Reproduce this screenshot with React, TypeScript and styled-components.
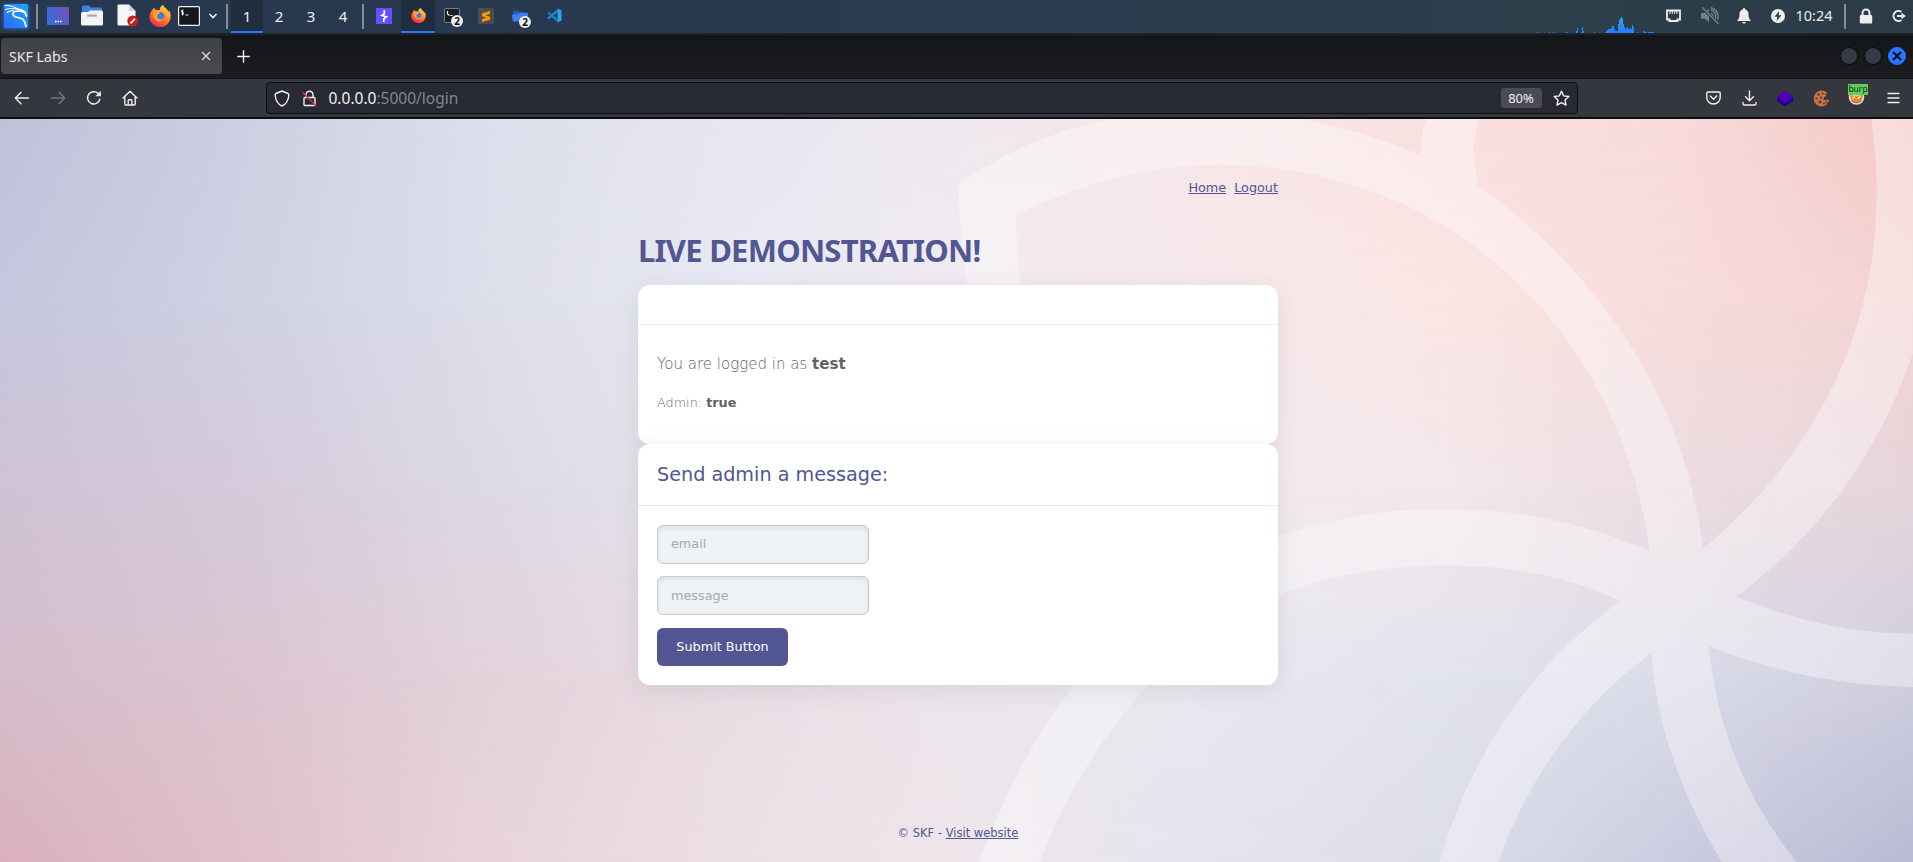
import React from "react";
import styled, { createGlobalStyle } from "styled-components";

const GlobalStyle = createGlobalStyle`
  * { box-sizing: border-box; }
  html, body { margin: 0; padding: 0; overflow: hidden; }
  body { font-family: "DejaVu Sans", sans-serif; }
`;

const Screen = styled.div`
  width: 1913px;
  height: 862px;
  display: flex;
  flex-direction: column;
  overflow: hidden;
  background: #17181c;
`;

/* ---------- desktop panel ---------- */

const Panel = styled.div`
  height: 33px;
  flex: none;
  display: flex;
  align-items: center;
  justify-content: space-between;
  background: linear-gradient(90deg, #28394f 0%, #28394f 35%, #2c3f4b 80%, #2b3c47 100%);
  font-family: "Noto Sans", sans-serif;
  color: #eeeeec;
`;

const PanelGroup = styled.div`
  height: 33px;
  display: flex;
  align-items: center;
`;

const Slot = styled.div<{ $w: number; $active?: boolean }>`
  width: ${(p) => p.$w}px;
  height: 33px;
  flex: none;
  display: flex;
  align-items: center;
  justify-content: center;
  font-size: 15px;
  padding-bottom: ${(p) => (p.$active ? 0 : 2)}px;
  border-bottom: ${(p) => (p.$active ? "2px solid #2777ff" : "none")};
  background: ${(p) => (p.$active ? "#1f2d3e" : "transparent")};
  svg { display: block; }
`;

const Separator = styled.div<{ $before: number; $after: number }>`
  width: 2px;
  height: 25px;
  flex: none;
  margin: 0 ${(p) => p.$after}px 0 ${(p) => p.$before}px;
  background: #858d97;
`;

const Clock = styled.div`
  width: 38px;
  padding-bottom: 2px;
  text-align: center;
  font-size: 14.4px;
`;

/* ---------- browser chrome ---------- */

const TabBar = styled.div`
  height: 45px;
  flex: none;
  display: flex;
  align-items: center;
  justify-content: space-between;
  padding-left: 1px;
  border-top: 2px solid #202228;
  background: linear-gradient(#15161a, #1b1b20);
  font-family: "Noto Sans", sans-serif;
`;

const TabArea = styled.div`
  display: flex;
  align-items: center;
`;

const Tab = styled.div`
  width: 221px;
  height: 36px;
  margin-top: -1px;
  padding: 0 11px 0 8px;
  display: flex;
  align-items: center;
  justify-content: space-between;
  border-radius: 4px;
  background: linear-gradient(#404145, #494a50);
  color: #e6e6e2;
  font-size: 14.2px;
`;

const NewTab = styled.div`
  width: 43px;
  display: flex;
  justify-content: center;
`;

const WindowButtons = styled.div`
  display: flex;
  gap: 6px;
  padding: 0 7px 1px 0;
`;

const WindowButton = styled.div<{ $close?: boolean }>`
  width: 18px;
  height: 18px;
  display: flex;
  align-items: center;
  justify-content: center;
  border-radius: 50%;
  border: 1px solid ${(p) => (p.$close ? "#2777ff" : "#090a0d")};
  background: ${(p) => (p.$close ? "#2777ff" : "#363a47")};
`;

const Toolbar = styled.div`
  height: 41px;
  flex: none;
  display: flex;
  align-items: center;
  justify-content: space-between;
  padding: 0 2px 0 4px;
  border-top: 1px solid #101114;
  border-bottom: 2px solid #0d0e11;
  background: #35373e;
  font-family: "Noto Sans", sans-serif;
`;

const ToolGroup = styled.div`
  display: flex;
  align-items: center;
`;

const ToolButton = styled.div`
  width: 36px;
  height: 34px;
  display: flex;
  align-items: center;
  justify-content: center;
`;

const UrlBar = styled.div`
  width: 1312px;
  height: 32px;
  margin-left: 0;
  display: flex;
  align-items: center;
  padding: 0 7px 0 5px;
  border: 1px solid #0c0d12;
  border-radius: 4px;
  background: #272935;
`;

const UrlIcon = styled.div`
  width: 28px;
  padding-left: 2px;
  display: flex;
`;

const UrlText = styled.div`
  flex: 1;
  padding-left: 1px;
  font-size: 15.5px;
  color: #85868f;
`;

const Host = styled.span`
  color: #f2f2f0;
`;

const Zoom = styled.div`
  width: 41px;
  height: 20px;
  margin-right: 11px;
  border-radius: 3px;
  background: #4a4b55;
  color: #f0f0ee;
  font-size: 13px;
  line-height: 21px;
  text-align: center;
`;

/* ---------- page ---------- */

const Page = styled.main`
  position: relative;
  flex: 1;
  display: flex;
  flex-direction: column;
  align-items: center;
  padding-left: 3px;
  color: #525693;
`;

const Backdrop = styled.svg`
  position: absolute;
  inset: 0;
`;

const Column = styled.div`
  position: relative;
  width: 640px;
  height: 743px;
  display: flex;
  flex-direction: column;
`;

const Nav = styled.nav`
  height: 20px;
  margin-top: 59px;
  display: flex;
  justify-content: flex-end;
  gap: 8px;
  font-size: 12.8px;
  line-height: 20px;
`;

const Link = styled.a`
  color: #525693;
  text-decoration: underline;
`;

const Title = styled.h1`
  height: 50px;
  margin: 27px 0 10px;
  font-family: "Noto Sans", sans-serif;
  font-weight: 700;
  font-size: 31px;
  letter-spacing: -0.76px;
  line-height: 50px;
  white-space: nowrap;
`;

const Card = styled.section<{ $h: number }>`
  height: ${(p) => p.$h}px;
  flex: none;
  border-radius: 12px;
  background: #fff;
  box-shadow: 0 5px 25px rgba(60, 60, 60, 0.1);
`;

const CardHeader = styled.div<{ $h: number }>`
  height: ${(p) => p.$h}px;
  padding: 17px 19px 0;
  border-bottom: 1px solid #ebebeb;
  font-size: 19.2px;
  line-height: 28px;
`;

const CardBody = styled.div`
  padding: 19px;
`;

const Line = styled.p<{ $size: number; $top: number }>`
  margin: ${(p) => p.$top}px 0 0;
  font-size: ${(p) => p.$size}px;
  line-height: 20px;
  font-weight: 200;
  color: #626466;
  strong { font-weight: 700; color: #5f6365; }
`;

const Field = styled.input<{ $lift?: number }>`
  display: block;
  width: 212px;
  height: 39px;
  margin: 0 0 12px;
  padding: 0 13px ${(p) => p.$lift ?? 0}px;
  border: 1px solid #c8cacb;
  border-radius: 6px;
  background: #eff3f6;
  box-shadow: inset 0 2px 5px rgba(0, 0, 0, 0.09);
  font: 12.8px "DejaVu Sans", sans-serif;
  &::placeholder { color: #a5a8aa; opacity: 1; }
`;

const Submit = styled.button`
  display: block;
  width: 131px;
  height: 38px;
  margin-top: 13px;
  padding: 0 0 2px;
  border: 0;
  border-radius: 6px;
  background: #525693;
  color: #fff;
  font: 12.8px "DejaVu Sans", sans-serif;
`;

const Footer = styled.footer`
  margin-top: 138px;
  font-size: 11.5px;
  line-height: 20px;
  text-align: center;
`;

/* ---------- backdrop ---------- */

const meshRows = [
  ["#bfc1da", "#cdd0e2", "#dcdfeb", "#e6e7f1", "#efe9ee", "#f7e6e8", "#fae0e0", "#f9dbdb", "#f4c8c6"],
  ["#c4c7dd", "#cfd2e3", "#dcdeea", "#e7e9f2", "#efebf0", "#f7eaec", "#fae6e5", "#f8dcdc", "#f3d3d3"],
  ["#cfc2d5", "#d5cadb", "#dcd9e4", "#e5e4ec", "#ebe9ed", "#f2ebee", "#f3e8ea", "#ecdde1", "#e5d5da"],
  ["#d5bdca", "#dcc5d0", "#e3d2da", "#eadde4", "#ece6eb", "#e8e9f0", "#e2e4ee", "#dadce9", "#cfcfe0"],
  ["#dab0bc", "#e0bfc9", "#e8d3d9", "#ecdfe4", "#eee6eb", "#e5e4ed", "#dcdeea", "#cbcce0", "#b9b9d3"],
];

const ribbons = [
  "M90 140C310-70 580-50 805 78L893 140C1100 345 1216 610 1243 908L1160 912C1135 640 1020 350 800 195C600 65 390 65 180 204Q180 280 188 360H105Q92 250 90 140Z",
  "M122 1568C170 1400 215 1290 270 1195C400 965 600 824 840 824Q1010 824 1160 912L1115 1018Q1000 943 850 943C660 943 500 1020 383 1195Q270 1370 216 1568Z",
  "M1503 0C1540 340 1460 660 1243 908L1160 912L1115 1018L1163 1128L1252 1112L1294 1009Q1490 810 1568 495V0Z",
  "M1294 1009Q1430 1085 1568 1087V1199Q1400 1195 1252 1112Z",
  "M1252 1112Q1270 1370 1388 1568H1272Q1175 1350 1163 1128Z",
  "M1115 1018Q910 1220 835 1568H926Q1000 1290 1163 1128Z",
  "M815 0Q806 35 805 78L893 140Q892 100 888 65Q890 30 897 0Z",
];

const PageBackdrop = () => (
  <Backdrop width="1913" height="743" viewBox="0 0 1913 743">
    <defs>
      {meshRows.map((row, i) => (
        <React.Fragment key={i}>
          <linearGradient id={`row${i}`}>
            {row.map((c, k) => (
              <stop key={k} offset={k / 8} stopColor={c} />
            ))}
          </linearGradient>
          {i > 0 && (
            <>
              <linearGradient id={`fade${i}`} x1="0" x2="0" y1="0" y2="1">
                <stop offset={(i - 1) / 4} stopColor="#fff" stopOpacity="0" />
                <stop offset={i / 4} stopColor="#fff" />
              </linearGradient>
              <mask id={`mask${i}`}>
                <rect width="1913" height="743" fill={`url(#fade${i})`} />
              </mask>
            </>
          )}
        </React.Fragment>
      ))}
    </defs>
    {meshRows.map((_, i) => (
      <rect key={i} width="1913" height="743" fill={`url(#row${i})`} mask={i ? `url(#mask${i})` : undefined} />
    ))}
    <g transform="matrix(.646 0 0 .4745 900 -1)" fill="#fff" opacity=".36">
      {ribbons.map((d) => (
        <path key={d} d={d} />
      ))}
    </g>
  </Backdrop>
);

/* ---------- icons ---------- */

const line = { fill: "none", stroke: "#f0f0ec", strokeWidth: 1.4, strokeLinecap: "round", strokeLinejoin: "round" } as const;

const KaliIcon = () => (
  <svg width="32" height="31" viewBox="0 0 32 31">
    <defs>
      <linearGradient id="kali" x1="0" y1="1" x2="1" y2="0">
        <stop offset="0" stopColor="#2a6bff" />
        <stop offset="1" stopColor="#22a4f5" />
      </linearGradient>
      <filter id="glow"><feGaussianBlur stdDeviation="1.5" /></filter>
    </defs>
    <rect x="3" y="4" width="26" height="25" rx="2" fill="#2777ff" opacity=".6" filter="url(#glow)" />
    <rect x="4" y="4" width="24" height="24" rx="1.5" fill="url(#kali)" />
    <path d="M5 5.500c5 0 9 .5 12.500 3.500M5.500 9.500c4-1.300 7.500-1.300 12-.5M7 12.500c2-1.300 4-2 6.500-2" fill="none" stroke="#fff" strokeWidth="1.200" strokeLinecap="round" />
    <path d="M17.500 9c3 .3 6 1.500 7.500 3.500l1.500 3.500M24.500 12.500c-4-2-11.500-2.500-11.500 1.500 0 4.500 8 2.500 10.500 6 1.500 2 2 4 2.500 6.500" fill="none" stroke="#fff" strokeWidth="1.700" strokeLinecap="round" strokeLinejoin="round" />
  </svg>
);

const DesktopIcon = () => (
  <svg width="22" height="18" viewBox="0 0 22 18">
    <defs>
      <linearGradient id="desk" x1="0" y1=".6" x2="1" y2=".2">
        <stop offset="0" stopColor="#346fdc" />
        <stop offset="1" stopColor="#7550b4" />
      </linearGradient>
    </defs>
    <rect width="22" height="18" rx="1" fill="url(#desk)" />
    <path d="M8 14.500h1.500M10.500 14.500H12M13 14.500h1.500" stroke="#fff" strokeWidth="1.500" />
  </svg>
);

const FilesIcon = () => (
  <svg width="22" height="21" viewBox="0 0 22 21">
    <path d="M1 10V2a1.500 1.500 0 0 1 1.500-1.500H8l2 2h9.500A1.500 1.500 0 0 1 21 4v6z" fill="#3b82e4" />
    <path d="M0 8.500a1.500 1.500 0 0 1 1.500-1.500H7l2-1.500h11.500A1.500 1.500 0 0 1 22 7v12a1.500 1.500 0 0 1-1.500 1.500h-19A1.500 1.500 0 0 1 0 19z" fill="#f3f3f1" />
    <rect x="6" y="9.500" width="10" height="2.300" rx="1" fill="#aaa" />
  </svg>
);

const EditorIcon = () => (
  <svg width="22" height="23" viewBox="0 0 22 23">
    <path d="M1.500.5H12l6.500 6.500V21.500h-17A1 1 0 0 1 .5 20.500v-19a1 1 0 0 1 1-1z" fill="#f6f6f5" />
    <path d="M12 .5V7h6.500z" fill="#d0d0d0" />
    <circle cx="15.800" cy="17" r="5.500" fill="#d41919" />
    <path d="M13.500 19.400l4.500-4.700" stroke="#fff" strokeWidth="1.700" />
  </svg>
);

const FirefoxIcon = ({ size }: { size: number }) => (
  <svg width={size} height={size} viewBox="0 0 24 24">
    <defs>
      <linearGradient id="fox" x1=".8" y1="0" x2=".2" y2="1">
        <stop offset="0" stopColor="#ffe14a" />
        <stop offset=".4" stopColor="#ff9a26" />
        <stop offset=".75" stopColor="#ff4a3c" />
        <stop offset="1" stopColor="#e8236e" />
      </linearGradient>
    </defs>
    <path d="M4 5c.5-1 1-1.700 1.700-2.200C5.800 4 6.500 5 8 5.400c1.500-.3 2.800 0 3.800.4C11.500 3 13 1 15.500 0c.5 3 5 4 6 8 .3-.7.300-1.500.200-2.200 1.700 2.200 2.200 5 1.800 7.700C22.700 19.500 18 24 12 24S.5 19.300.5 13.200C.5 10 2 7 4 5z" fill="url(#fox)" />
    <circle cx="11.800" cy="12.300" r="4.800" fill="#5b55d8" />
    <path d="M4.500 7.500c3.500-1.800 6-.7 8.200 1.500-1 1-2.800 1-3.600 2.400-.8 1.800.9 3.800 3.600 3.200 1.600-.4 2.800-1 3.500-.3-1 2.600-3 3.800-5.500 3.700C6.500 17.500 4 13 4.500 7.500z" fill="#ffa32b" />
    <path d="M9 11.500c1-2 3.500-3 5.500-1.500 2 1.800 1.500 5-.8 5.800-2.700.5-5-1.300-4.700-4.300z" fill="#3f7fe0" />
  </svg>
);

const TerminalIcon = () => (
  <svg width="22" height="20" viewBox="0 0 22 20">
    <rect x=".6" y=".6" width="20.800" height="18.800" rx="1" fill="#16171a" stroke="#f0f0ee" strokeWidth="1.200" />
    <path d="M5.300 4.500H3.700v1.800h1.600v1.900H3.500M4.500 3.500v6M7.500 9h2.800" fill="none" stroke="#fff" strokeWidth="1" />
  </svg>
);

const PromptIcon = () => (
  <svg width="16" height="15" viewBox="0 0 16 15">
    <rect x=".5" y=".5" width="15" height="14" rx="1.500" fill="#1c1d21" stroke="#777c80" />
    <path d="M3.500 3v3l2 1.500M6.500 7.500h2" fill="none" stroke="#fff" strokeWidth="1.100" />
  </svg>
);

const ChevronIcon = () => (
  <svg width="10" height="8" viewBox="0 0 10 8">
    <path d="M1.500 2L5 5.500 8.500 2" fill="none" stroke="#f0f0ec" strokeWidth="1.600" />
  </svg>
);

const BurpIcon = () => (
  <svg width="16" height="16" viewBox="0 0 16 16">
    <rect width="16" height="16" fill="#6351fb" />
    <path d="M8.300 2v3.700L5.800 7.500l4.600 1.300-2.600 2V14" fill="none" stroke="#fff" strokeWidth="1.700" />
  </svg>
);

const SublimeIcon = () => (
  <svg width="16" height="16" viewBox="0 0 16 16">
    <rect width="16" height="16" rx="1" fill="#4d4d4d" />
    <path d="M12 3v3L7.500 7.300 12 8.700v3L4 14v-3l4.500-1.400L4 8.200V5.300z" fill="#ff9800" />
  </svg>
);

const BlueFolderIcon = () => (
  <svg width="16" height="14" viewBox="0 0 16 14">
    <path d="M1 1.500h5l1.500 1.500H14a1 1 0 0 1 1 1v8H1z" fill="#2458b8" />
    <path d="M0 5.500h5L7 4h9v8.500H.8z" fill="#3b7ff0" />
  </svg>
);

const CodeIcon = () => (
  <svg width="15" height="15" viewBox="0 0 15 15">
    <path d="M10.500.5L14.500 2.500v10l-4 2z" fill="#29a5ee" />
    <path d="M11 .8v3L1.900 11.300.3 9.800z" fill="#1c8ed8" />
    <path d="M11 14.200v-3L1.900 3.700.3 5.200z" fill="#1583cd" />
  </svg>
);

const BadgeWrap = styled.div`
  position: relative;
  display: flex;
`;

const Badge = styled.span`
  position: absolute;
  left: 7px;
  top: 7px;
  width: 12px;
  height: 12px;
  border-radius: 50%;
  background: #eeeeec;
  color: #111;
  font-size: 10px;
  font-weight: 700;
  line-height: 12px;
  text-align: center;
`;

const activity: [number, number][] = [
  [0, 1], [12, 1], [16, 1], [28, 1], [30, 1], [39, 2], [40, 5], [44, 1], [45, 6], [46, 2], [57, 1],
  [68, 1], [69, 2], [70, 3], [71, 4], [72, 4], [73, 4], [74, 5], [75, 7], [76, 7], [77, 4], [78, 2], [79, 2], [80, 2],
  [81, 9], [82, 13], [83, 15], [84, 16], [85, 14], [86, 9], [87, 6], [88, 4], [89, 5], [90, 6], [91, 4], [92, 4],
  [93, 5], [94, 4], [95, 8], [96, 6], [100, 1], [106, 2], [107, 2], [108, 1], [109, 1], [111, 1], [112, 1], [113, 1], [114, 1], [115, 1], [116, 1],
];

const ActivityGraph = () => (
  <svg width="118" height="33" viewBox="0 0 118 33">
    <defs>
      <linearGradient id="load" gradientUnits="userSpaceOnUse" x1="0" x2="0" y1="17" y2="30">
        <stop offset="0" stopColor="#1fb0f2" />
        <stop offset="1" stopColor="#2780ff" />
      </linearGradient>
    </defs>
    {activity.map(([x, h]) => (
      <rect key={x} x={x} y={33 - h} width="1.050" height={h} fill="url(#load)" />
    ))}
  </svg>
);

const NetworkIcon = () => (
  <svg width="15" height="14" viewBox="0 0 15 14">
    <path d="M1 1.500h13v9h-2.500V12h-8v-1.500H1z" fill="none" stroke="#eeeeec" strokeWidth="1.800" />
    <path d="M4 2v3M6.300 2v3M8.700 2v3M11 2v3" stroke="#eeeeec" strokeWidth="1" />
  </svg>
);

const MutedIcon = () => (
  <svg width="18" height="18" viewBox="0 0 18 18" fill="none" stroke="#75818a">
    <path d="M0 6h3.500L8 1.500v14L3.500 11.500H0z" fill="#75818a" stroke="none" />
    <path d="M10 6a4 4 0 0 1 1.500 5M10 3a7 7 0 0 1 4 10M10 .8a9 9 0 0 1 6.500 12" strokeWidth="1.400" />
    <path d="M1 .5l16.500 16.700" stroke="#2c3f4b" strokeWidth="3" />
    <path d="M1.500.5l16 16.500" strokeWidth="1.500" />
  </svg>
);

const BellIcon = () => (
  <svg width="14" height="16" viewBox="0 0 14 16" fill="#eeeeec">
    <path d="M7 0a1.400 1.400 0 0 1 1.300 1.500C10.500 2 11.500 4 11.500 6c0 4 .8 5.300 2.500 7H0c1.700-1.700 2.500-3 2.500-7 0-2 1-4 3.200-4.500A1.400 1.400 0 0 1 7 0zM5.200 14h3.600a1.800 1.500 0 0 1-3.600 0z" />
  </svg>
);

const PowerIcon = () => (
  <svg width="14" height="14" viewBox="0 0 14 14">
    <circle cx="7" cy="7" r="7" fill="#eeeeec" />
    <path d="M8.200 2L3.500 7.700h2.800L5.600 12l4.900-5.800H7.700z" fill="#2c3f4b" />
  </svg>
);

const LockIcon = () => (
  <svg width="14" height="16" viewBox="0 0 14 16">
    <path d="M3.500 8V5a3.500 3.500 0 0 1 7 0v3" fill="none" stroke="#eeeeec" strokeWidth="2" />
    <rect x=".8" y="7" width="12.400" height="8.500" rx="1" fill="#eeeeec" />
  </svg>
);

const LogoutIcon = () => (
  <svg width="15" height="14" viewBox="0 0 15 14" fill="none" stroke="#eeeeec" strokeWidth="2">
    <path d="M10.500 3A5 5 0 1 0 10.500 11" />
    <path d="M6 7h5" />
    <path d="M10.500 3.800v6.400L14.800 7z" fill="#eeeeec" stroke="none" />
  </svg>
);

const CrossIcon = ({ size, color, width }: { size: number; color: string; width: number }) => (
  <svg width={size} height={size} viewBox="0 0 10 10">
    <path d="M1 1l8 8M9 1L1 9" stroke={color} strokeWidth={width} />
  </svg>
);

const PlusIcon = () => (
  <svg width="13" height="13" viewBox="0 0 13 13">
    <path d="M6.500.8v11.400M.8 6.500h11.400" {...line} />
  </svg>
);

const ArrowIcon = ({ back }: { back?: boolean }) => (
  <svg width="16" height="14" viewBox="0 0 16 14">
    <path d={back ? "M14.500 7H1.500M7 1.300L1.300 7 7 12.700" : "M1.500 7h13M9 1.300L14.700 7 9 12.700"} {...line} stroke={back ? "#f0f0ec" : "#76777b"} />
  </svg>
);

const ReloadIcon = () => (
  <svg width="16" height="16" viewBox="0 0 16 16">
    <path d="M13.800 9.300A6.200 6.200 0 1 1 12 3.300l1.500 1.400" {...line} strokeWidth="1.500" />
    <path d="M14.800.8v5.500H9.300z" fill="#f0f0ec" />
  </svg>
);

const HomeIcon = () => (
  <svg width="16" height="16" viewBox="0 0 16 16">
    <path d="M1 8l7-6.800L15 8M2.800 6.700V14a1 1 0 0 0 1 1h8.400a1 1 0 0 0 1-1V6.700M6.200 15v-4.500a.8.800 0 0 1 .8-.8h2a.8.800 0 0 1 .8.800V15" {...line} />
  </svg>
);

const ShieldIcon = () => (
  <svg width="16" height="17" viewBox="0 0 16 17">
    <path d="M8 1L14 3.500C14.800 3.800 14.900 4.300 14.800 5.500C14.400 10 12.500 14 8 16C3.500 14 1.600 10 1.200 5.500C1.100 4.300 1.200 3.800 2 3.500Z" {...line} />
  </svg>
);

const InsecureIcon = () => (
  <svg width="15" height="17" viewBox="0 0 15 17">
    <path d="M4 7.500V4.800a3.500 3.500 0 0 1 7 0v2.700" {...line} />
    <rect x="2" y="7.500" width="11" height="8" rx="1" {...line} />
    <path d="M.8 2.500l13.400 13.700" stroke="#e22850" strokeWidth="1.400" />
  </svg>
);

const StarIcon = () => (
  <svg width="17" height="17" viewBox="0 0 17 17">
    <path d="M8.500 1.200l2.200 4.700 5.100.6-3.800 3.500 1 5.100-4.500-2.500L4 15.100l1-5.100L1.200 6.500l5.100-.6z" {...line} />
  </svg>
);

const PocketIcon = () => (
  <svg width="15" height="14" viewBox="0 0 15 14">
    <path d="M2 1h11a1.200 1.200 0 0 1 1.200 1.200v4C14.200 10 11.500 13 7.500 13S.8 10 .8 6.200v-4A1.200 1.200 0 0 1 2 1zM4.300 5l3.200 3.200L10.700 5" {...line} />
  </svg>
);

const DownloadIcon = () => (
  <svg width="15" height="16" viewBox="0 0 15 16">
    <path d="M7.500 1v9.500M3.500 6.800l4 4 4-4M1 12.500v1.300A1.300 1.300 0 0 0 2.300 15h10.400a1.300 1.300 0 0 0 1.300-1.200v-1.300" {...line} />
  </svg>
);

const CubeIcon = () => (
  <svg width="16" height="17" viewBox="0 0 16 17">
    <path d="M0 7l8-6 8 6v4l-8 5.500L0 11z" fill="#240089" />
    <path d="M8 .5L16 7l-8 6-8-6z" fill="#5000bd" />
  </svg>
);

const CookieIcon = () => (
  <svg width="17" height="17" viewBox="0 0 17 17">
    <path d="M14.500 3A8 8 0 1 0 14.500 14l-2-1.500.5-2-2.500-1L11 7l2-.5V4.500z" fill="#c3754b" />
    <circle cx="14.500" cy="11" r="1.400" fill="#c3754b" />
    <g fill="#64321f">
      <circle cx="5.500" cy="4.500" r="1.200" /><circle cx="8" cy="7.500" r="1.100" /><circle cx="3.500" cy="8.500" r="1.100" />
      <circle cx="7" cy="12" r="1.400" /><circle cx="11" cy="13.500" r="1" /><circle cx="9.500" cy="3.500" r="1" /><circle cx="12.500" cy="4" r=".7" />
    </g>
  </svg>
);

const ProfileWrap = styled.div`
  position: relative;
  display: flex;
`;

const ProfileTag = styled.span`
  position: absolute;
  left: 0;
  top: -5px;
  width: 20px;
  height: 11px;
  background: #5fce5f;
  color: #123012;
  font-size: 8.5px;
  line-height: 10px;
  text-align: center;
`;

const FaceIcon = () => (
  <svg width="18" height="18" viewBox="0 0 18 18">
    <circle cx="8.500" cy="8" r="7.800" fill="#e9dccb" />
    <path d="M2 6l6 1 7-1-1 5-5.500 3L3 11z" fill="#e8862a" />
    <path d="M4.500 9.500l2.500-2M9.500 9.500l3-2" stroke="#fff" strokeWidth="1.200" />
    <path d="M3.500 12q5 3.500 10 0" fill="none" stroke="#a05a32" />
  </svg>
);

const MenuIcon = () => (
  <svg width="13" height="12" viewBox="0 0 13 12">
    <path d="M1 1.500h11M1 6h11M1 10.500h11" {...line} />
  </svg>
);

/* ---------- screen ---------- */

export default function App() {
  return (
    <>
      <GlobalStyle />
      <Screen>
        <Panel>
          <PanelGroup>
            <Slot $w={32}><KaliIcon /></Slot>
            <Separator $before={4} $after={6} />
            <Slot $w={28}><DesktopIcon /></Slot>
            <Slot $w={40}><FilesIcon /></Slot>
            <Slot $w={32}><EditorIcon /></Slot>
            <Slot $w={31}><FirefoxIcon size={22} /></Slot>
            <Slot $w={28}><TerminalIcon /></Slot>
            <Slot $w={20}><ChevronIcon /></Slot>
            <Separator $before={3} $after={3} />
            <Slot $w={32} $active>1</Slot>
            <Slot $w={32}>2</Slot>
            <Slot $w={32}>3</Slot>
            <Slot $w={32}>4</Slot>
            <Separator $before={3} $after={3} />
            <Slot $w={34}><BurpIcon /></Slot>
            <Slot $w={34} $active><FirefoxIcon size={15} /></Slot>
            <Slot $w={34}><BadgeWrap><PromptIcon /><Badge>2</Badge></BadgeWrap></Slot>
            <Slot $w={34}><SublimeIcon /></Slot>
            <Slot $w={34}><BadgeWrap><BlueFolderIcon /><Badge>2</Badge></BadgeWrap></Slot>
            <Slot $w={34}><CodeIcon /></Slot>
          </PanelGroup>
          <PanelGroup>
            <ActivityGraph />
            <Slot $w={37}><NetworkIcon /></Slot>
            <Slot $w={35}><MutedIcon /></Slot>
            <Slot $w={34}><BellIcon /></Slot>
            <Slot $w={34}><PowerIcon /></Slot>
            <Clock>10:24</Clock>
            <Separator $before={11} $after={3} />
            <Slot $w={34}><LockIcon /></Slot>
            <Slot $w={30}><LogoutIcon /></Slot>
          </PanelGroup>
        </Panel>

        <TabBar>
          <TabArea>
            <Tab>
              SKF Labs
              <CrossIcon size={10} color="#e6e6e2" width={1.1} />
            </Tab>
            <NewTab><PlusIcon /></NewTab>
          </TabArea>
          <WindowButtons>
            <WindowButton />
            <WindowButton />
            <WindowButton $close><CrossIcon size={10} color="#0b1020" width={2.2} /></WindowButton>
          </WindowButtons>
        </TabBar>

        <Toolbar>
          <ToolGroup>
            <ToolButton><ArrowIcon back /></ToolButton>
            <ToolButton><ArrowIcon /></ToolButton>
            <ToolButton><ReloadIcon /></ToolButton>
            <ToolButton><HomeIcon /></ToolButton>
          </ToolGroup>
          <UrlBar>
            <UrlIcon><ShieldIcon /></UrlIcon>
            <UrlIcon><InsecureIcon /></UrlIcon>
            <UrlText><Host>0.0.0.0</Host>:5000/login</UrlText>
            <Zoom>80%</Zoom>
            <StarIcon />
          </UrlBar>
          <ToolGroup>
            <ToolButton><PocketIcon /></ToolButton>
            <ToolButton><DownloadIcon /></ToolButton>
            <ToolButton><CubeIcon /></ToolButton>
            <ToolButton><CookieIcon /></ToolButton>
            <ToolButton><ProfileWrap><FaceIcon /><ProfileTag>burp</ProfileTag></ProfileWrap></ToolButton>
            <ToolButton><MenuIcon /></ToolButton>
          </ToolGroup>
        </Toolbar>

        <Page>
          <PageBackdrop />
          <Column>
            <Nav>
              <Link>Home</Link>
              <Link>Logout</Link>
            </Nav>
            <Title>LIVE DEMONSTRATION!</Title>
            <Card $h={159}>
              <CardHeader $h={40} />
              <CardBody>
                <Line $size={15.04} $top={10}>You are logged in as <strong>test</strong></Line>
                <Line $size={12.8} $top={19}>Admin: <strong>true</strong></Line>
              </CardBody>
            </Card>
            <Card $h={241}>
              <CardHeader $h={62}>Send admin a message:</CardHeader>
              <CardBody>
                <Field placeholder="email" $lift={2} />
                <Field placeholder="message" />
                <Submit>Submit Button</Submit>
              </CardBody>
            </Card>
            <Footer>© SKF - <Link>Visit website</Link></Footer>
          </Column>
        </Page>
      </Screen>
    </>
  );
}
